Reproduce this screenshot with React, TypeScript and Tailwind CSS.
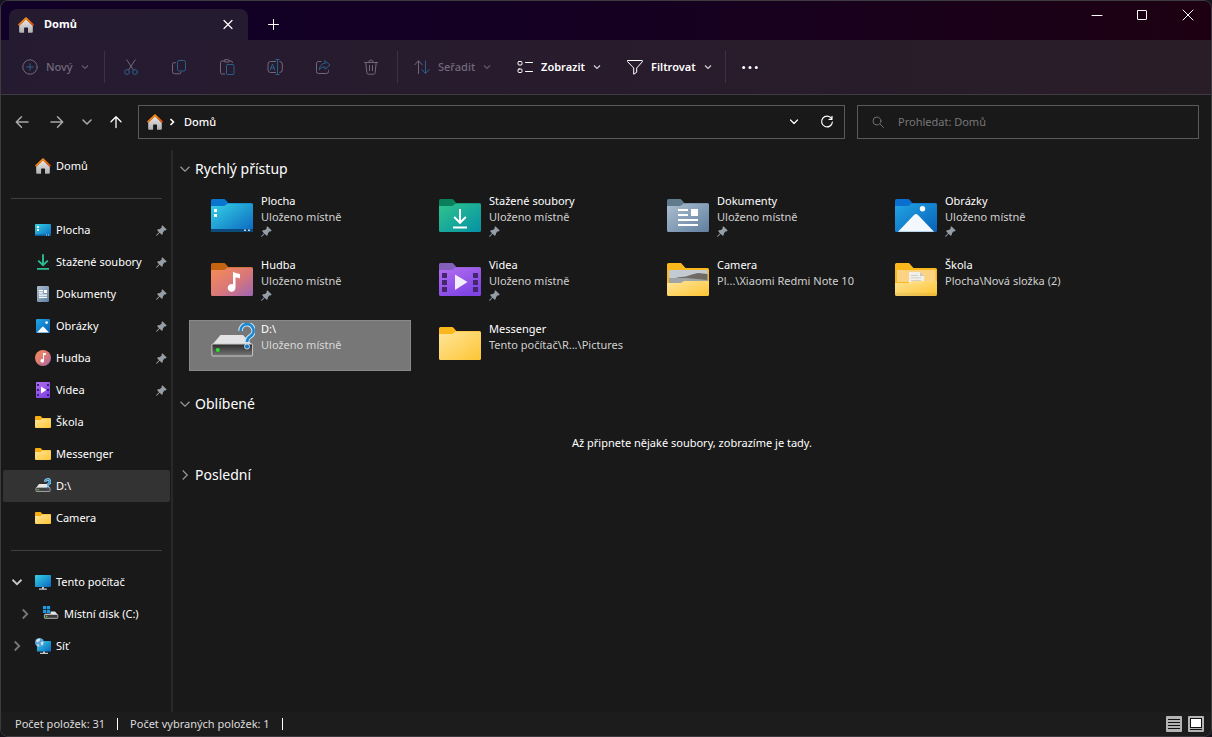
import React from "react";

type IconProps = { className?: string };

function Defs() {
  return (
    <svg className="absolute h-0 w-0" aria-hidden="true">
      <defs>
        <linearGradient id="roof" x1="0" y1="0" x2="1" y2="1">
          <stop offset="0" stopColor="#f9a21b" />
          <stop offset="1" stopColor="#d9480f" />
        </linearGradient>
        <linearGradient id="wall" x1="0" y1="0" x2="0" y2="1">
          <stop offset="0" stopColor="#e8e8e8" />
          <stop offset="1" stopColor="#b0b0b0" />
        </linearGradient>
        <linearGradient id="cyan" x1="0" y1="0" x2="1" y2="1">
          <stop offset="0" stopColor="#35d3e6" />
          <stop offset="1" stopColor="#0b66c0" />
        </linearGradient>
        <linearGradient id="green" x1="0" y1="0" x2="1" y2="1">
          <stop offset="0" stopColor="#2fc48d" />
          <stop offset="1" stopColor="#0591a5" />
        </linearGradient>
        <linearGradient id="slate" x1="0" y1="0" x2="1" y2="1">
          <stop offset="0" stopColor="#aebfd0" />
          <stop offset="1" stopColor="#5f7f9f" />
        </linearGradient>
        <linearGradient id="blue" x1="0" y1="0" x2="1" y2="1">
          <stop offset="0" stopColor="#22a5e4" />
          <stop offset="1" stopColor="#0760b8" />
        </linearGradient>
        <linearGradient id="music" x1="0" y1="0" x2="1" y2="1">
          <stop offset="0" stopColor="#f58d55" />
          <stop offset="0.55" stopColor="#d9777a" />
          <stop offset="1" stopColor="#9c66b4" />
        </linearGradient>
        <linearGradient id="purple" x1="0" y1="0" x2="0.6" y2="1">
          <stop offset="0" stopColor="#b36ff0" />
          <stop offset="1" stopColor="#8044e4" />
        </linearGradient>
        <linearGradient id="yellow" x1="0" y1="0" x2="1" y2="1">
          <stop offset="0" stopColor="#ffe59b" />
          <stop offset="1" stopColor="#fdc533" />
        </linearGradient>
        <linearGradient id="drive" x1="0" y1="0" x2="0" y2="1">
          <stop offset="0" stopColor="#2c2c2c" />
          <stop offset="1" stopColor="#777777" />
        </linearGradient>
      </defs>
    </svg>
  );
}

/* ---------- small coloured icons ---------- */

const Home = () => (
  <svg className="h-4 w-4 shrink-0" viewBox="0 0 16 16" aria-hidden="true">
    <path d="M1.200 8.500 8 2.200l6.800 6.300v6.300a.9.9 0 0 1-.9.9H10v-4.700a.6.6 0 0 0-.6-.6H6.700a.6.6 0 0 0-.6.600v4.700H2.100a.9.9 0 0 1-.9-.9z" fill="url(#wall)" />
    <path d="M1.100 7.700 8 1.300l6.900 6.400" fill="none" stroke="url(#roof)" strokeWidth="1.900" strokeLinecap="round" strokeLinejoin="round" />
  </svg>
);

const DesktopSmall = () => (
  <svg className="h-4 w-4 shrink-0" viewBox="0 0 16 16" aria-hidden="true">
    <rect y="2" width="16" height="12" rx="1" fill="url(#cyan)" />
    <path d="M2 4h2v2H2zM2 7h2v2H2z" fill="#fff" />
    <path d="M0 12.6h16v.6a.8.8 0 0 1-.8.8H.8a.8.8 0 0 1-.8-.8z" fill="#0b5c9c" />
    <path d="M11 12.5h1v1h-1zM13 12.5h1v1h-1z" fill="#cde" />
  </svg>
);

const DownloadSmall = () => (
  <svg className="h-4 w-4 shrink-0" viewBox="0 0 16 16" aria-hidden="true">
    <path d="M8 .3v10.5M3.200 6.600 8 11.200l4.800-4.600M2 14.900h12" fill="none" stroke="#2bbd93" strokeWidth="1.900" />
  </svg>
);

const DocSmall = () => (
  <svg className="h-4 w-4 shrink-0" viewBox="0 0 16 16" aria-hidden="true">
    <rect x="2" width="12" height="16" rx="1.200" fill="url(#slate)" />
    <path d="M4 4h4v1.200H4zM9 4h3v3H9zM4 6.200h4v1.200H4zM4 8.500h8v1.200H4zM4 10.800h8V12H4z" fill="#fff" />
  </svg>
);

const PictureSmall = () => (
  <svg className="h-4 w-4 shrink-0" viewBox="0 0 16 16" aria-hidden="true">
    <rect x="1" y="1" width="14" height="14" rx="1" fill="url(#blue)" />
    <path d="m2 14.600 5.200-5.700a1 1 0 0 1 1.500 0l5.300 5.700z" fill="#fff" />
    <circle cx="11.600" cy="4.600" r="1.300" fill="#fff" />
  </svg>
);

const MusicSmall = () => (
  <svg className="h-4 w-4 shrink-0" viewBox="0 0 16 16" aria-hidden="true">
    <circle cx="8" cy="8" r="8" fill="url(#music)" />
    <path d="M8 3h2.900v2H9v5.800a1.800 1.800 0 1 1-1-1.600z" fill="#fff" />
  </svg>
);

const VideoSmall = () => (
  <svg className="h-4 w-4 shrink-0" viewBox="0 0 16 16" aria-hidden="true">
    <rect x="1" width="14" height="16" rx="1" fill="url(#purple)" />
    <path d="M2 2h2v2H2zM2 7h2v2H2zM2 12h2v2H2zM12 2h2v2h-2zM12 7h2v2h-2zM12 12h2v2h-2z" fill="#3a1f78" />
    <path d="m6 4.500 5.400 3.500L6 11.500z" fill="#fff" />
  </svg>
);

const FolderSmall = () => (
  <svg className="h-4 w-4 shrink-0" viewBox="0 0 16 16" aria-hidden="true">
    <path d="M0 3a1 1 0 0 1 1-1h4.600L7.400 4H15a1 1 0 0 1 1 1v3H0z" fill="#f7ae10" />
    <path d="M0 6h5.500L7.300 4.600H16V13a1 1 0 0 1-1 1H1a1 1 0 0 1-1-1z" fill="url(#yellow)" />
  </svg>
);

const DriveSmall = () => (
  <svg className="h-4 w-4 shrink-0" viewBox="0 0 16 16" aria-hidden="true">
    <path d="M4 6h8l3 4H1z" fill="#e6e6e6" />
    <rect x="1" y="9.500" width="14" height="4" rx=".6" fill="#444" stroke="#b5b5b5" strokeWidth=".8" />
    <path d="M2.600 11h1.300v1.300H2.600z" fill="#3fe03f" />
    <path d="M10.400 3.700a2.300 2.300 0 1 1 3.300 2.100c-.8.400-1 .8-1 1.700" fill="none" stroke="#bfe0f7" strokeWidth="2.600" />
    <path d="M10.400 3.700a2.300 2.300 0 1 1 3.300 2.100c-.8.400-1 .8-1 1.700" fill="none" stroke="#2190d6" strokeWidth="1.300" />
    <circle cx="12.700" cy="9.600" r="1" fill="#2190d6" />
  </svg>
);

const Monitor = () => (
  <svg className="h-4 w-4 shrink-0" viewBox="0 0 16 16" aria-hidden="true">
    <rect y="1" width="16" height="12" rx=".8" fill="url(#cyan)" />
    <path d="M7 13h2v1.600h3v1.200H4v-1.200h3z" fill="#c4c9ce" />
  </svg>
);

const SystemDrive = () => (
  <svg className="h-4 w-4 shrink-0" viewBox="0 0 16 16" aria-hidden="true">
    <path d="M0 0h3.200v3.200H0zM3.900 0h3.200v3.200H3.900zM0 3.900h3.200v3.200H0zM3.900 3.900h3.200v3.200H3.900z" fill="#1c9be8" />
    <path d="M7.600 5.500H12l3 3.500H1.500l.6-1.300h5.500z" fill="#e6e6e6" />
    <rect x="1.400" y="8.500" width="13.400" height="3.800" rx=".6" fill="#3c3c3c" stroke="#c2c2c2" strokeWidth=".9" />
    <path d="M3 9.800h1.300v1.300H3z" fill="#3fe03f" />
  </svg>
);

const Network = () => (
  <svg className="h-4 w-4 shrink-0" viewBox="0 0 16 16" aria-hidden="true">
    <rect x="2" y="3" width="14" height="10.500" rx=".6" fill="url(#cyan)" />
    <path d="M8 13.500h2v1.200h3v1.200H5v-1.200h3z" fill="#c4c9ce" />
    <circle cx="4.500" cy="4.500" r="4.500" fill="#5aa5d8" />
    <path d="M1 2.500C2.300.9 4 .6 5.300 1L4.600 3 2.300 4.400zM5.500 4.500l2.700-1c.4 1.600 0 3-1.200 4.200zM2 6.200l2 .6.300 1.800A4 4 0 0 1 2 7.600z" fill="#d3e6f3" />
  </svg>
);

const Pin = () => (
  <svg className="h-[11px] w-[11px] shrink-0" viewBox="0 0 11 11" aria-hidden="true">
    <path d="M6.400.3 10.700 4.600 9.600 5.500 8.700 5.300 7 7.200 6.700 9.300 5.600 9.800 3.600 7.800.9 10.700.2 10.700.3 9.900 3 7.200 1.200 5.300 1.800 4.200 4 4 5.800 2.300 5.500 1.300z" fill="#959ea7" />
  </svg>
);

/* ---------- large folder icons ---------- */

function Folder({ tab, body, children }: { tab: string; body: string; children?: React.ReactNode }) {
  return (
    <svg className="h-[34px] w-[42px]" viewBox="0 0 42 34" aria-hidden="true">
      <path d="M0 1.500A1.500 1.500 0 0 1 1.500 0H12.500c1 0 1.600.3 2.200 1l2.600 3H40.500A1.500 1.500 0 0 1 42 5.500V18H0z" fill={tab} />
      <path d="M0 7h12.500c1 0 1.700-.3 2.400-1l1-.9c.5-.5 1-.7 1.800-.7H40.500A1.500 1.500 0 0 1 42 5.900v25.600a1.500 1.500 0 0 1-1.500 1.500h-39A1.500 1.500 0 0 1 0 31.500z" fill={body} />
      {children}
    </svg>
  );
}

const DesktopFolder = () => (
  <Folder tab="#0a74cf" body="url(#cyan)">
    <path d="M3 10h3v3H3zM3 15h3v3H3z" fill="#fff" />
    <path d="M0 30h42v1.500a1.500 1.500 0 0 1-1.500 1.500h-39A1.500 1.500 0 0 1 0 31.500z" fill="#0c4c7c" />
    <path d="M33 30.500h2v1.500h-2zM37 30.500h2v1.500h-2z" fill="#bcd6e8" />
  </Folder>
);
const DownloadFolder = () => (
  <Folder tab="#0a7f5c" body="url(#green)">
    <path d="M21 10v13.500M15.200 18l5.800 5.800 5.800-5.800M14 28.500h14" fill="none" stroke="#fff" strokeWidth="2" />
  </Folder>
);
const DocFolder = () => (
  <Folder tab="#607c8c" body="url(#slate)">
    <path d="M11 10h10v2H11zM24 10h7v7h-7zM11 15h10v2H11zM11 20h20v2H11zM11 25h20v2H11z" fill="#fff" />
  </Folder>
);
const PictureFolder = () => (
  <Folder tab="#0a6fce" body="url(#blue)">
    <path d="m3 32.800 16-16.900a3 3 0 0 1 4 0l16 16.900z" fill="#f2f8fd" />
    <circle cx="27.500" cy="9.800" r="2.700" fill="#fff" />
  </Folder>
);
const MusicFolder = () => (
  <Folder tab="#c46410" body="url(#music)">
    <path d="M22 8.500c1.500 1.600 4 1.800 7 2.500v4.500c-1.800-.8-3.300-1-4.500-1v10.300a3.900 3.900 0 1 1-2.500-3.600z" fill="#fff" />
  </Folder>
);
const VideoFolder = () => (
  <Folder tab="#8460bd" body="url(#purple)">
    <path d="M3 10h5v5H3zM3 17h5v5H3zM3 24h5v5H3zM34 10h5v5h-5zM34 17h5v5h-5zM34 24h5v5h-5z" fill="#44266f" />
    <path d="M16 11.500 28.500 19 16 27z" fill="#f3eefb" />
  </Folder>
);
const PlainFolder = () => <Folder tab="#fbb81c" body="url(#yellow)" />;

const CameraFolder = () => (
  <svg className="h-[34px] w-[42px]" viewBox="0 0 42 34" aria-hidden="true">
    <path d="M0 1.500A1.500 1.500 0 0 1 1.500 0H14l4.500 5H40.500A1.500 1.500 0 0 1 42 6.500V30H0z" fill="#fbb81c" />
    <path d="M2 7h38.500v12H2z" fill="#c3cad2" />
    <path d="M10 14.500l9-1 6-2 6-1.500 9.500 1v9H2z" fill="#6f6a63" />
    <path d="M2 15h18l20.500 2v3H2z" fill="#9ea3a6" />
    <path d="M0 20h13c2 0 3-2 5-2h24v13.500a1.500 1.500 0 0 1-1.500 1.500h-39A1.500 1.500 0 0 1 0 31.500z" fill="url(#yellow)" />
  </svg>
);

const SchoolFolder = () => (
  <svg className="h-[34px] w-[42px]" viewBox="0 0 42 34" aria-hidden="true">
    <path d="M0 1.500A1.500 1.500 0 0 1 1.500 0H14l4.500 5H40.500A1.500 1.500 0 0 1 42 6.500V30H0z" fill="#fbb81c" />
    <path d="M2 7h38.500v12H2z" fill="#fbd382" />
    <path d="M14 9h11l4 4v8H14z" fill="#f1efea" />
    <path d="M25 9v4h4zM16 12h7v.7h-7zM16 14.500h10v.7H16zM16 17h10v.7H16z" fill="#c9c6c0" />
    <path d="M0 20h13c2 0 3-2 5-2h24v13.500a1.500 1.500 0 0 1-1.500 1.500h-39A1.500 1.500 0 0 1 0 31.500z" fill="url(#yellow)" fillOpacity=".93" />
  </svg>
);

const UnknownDrive = () => (
  <svg className="h-[34px] w-[44px]" viewBox="0 0 44 34" aria-hidden="true">
    <path d="M9.500 12h22.500l9.500 10H1z" fill="#e3e3e6" />
    <rect x=".9" y="21" width="40.700" height="12" rx="1" fill="url(#drive)" stroke="#c9c9c9" strokeWidth="1" />
    <circle cx="6.800" cy="27" r="2" fill="#2be32b" />
    <path d="M29.600 8a6.500 6.500 0 1 1 9.700 5.300c-2.300 1.400-3.300 2.500-3.300 5.700" fill="none" stroke="#c4e4f8" strokeWidth="4.600" />
    <path d="M29.600 8a6.500 6.500 0 1 1 9.700 5.300c-2.300 1.400-3.300 2.500-3.300 5.700" fill="none" stroke="#1c86cf" strokeWidth="2.600" />
    <circle cx="36" cy="23.500" r="2.500" fill="#1c78bd" stroke="#b9dcf2" strokeWidth="1" />
  </svg>
);

/* ---------- line icons ---------- */

function Line({ className = "h-4 w-4", children }: IconProps & { children: React.ReactNode }) {
  return (
    <svg className={className} viewBox="0 0 16 16" fill="none" stroke="currentColor" strokeWidth="1" strokeLinecap="round" strokeLinejoin="round" aria-hidden="true">
      {children}
    </svg>
  );
}

const Chevron = ({ className = "h-2 w-2" }: IconProps) => (
  <svg className={className} viewBox="0 0 8 8" fill="none" stroke="currentColor" strokeWidth="1.200" aria-hidden="true">
    <path d="m1 2.500 3 3 3-3" />
  </svg>
);

const BLUE = "#2c6088";

const NewIcon = () => (
  <Line><circle cx="8" cy="8" r="7.200" /><path d="M8 4.800v6.400M4.800 8h6.400" stroke={BLUE} /></Line>
);
const CutIcon = () => (
  <Line>
    <path d="M3.800.8 10.400 11M12.200.8 5.600 11" />
    <g stroke={BLUE}><circle cx="4" cy="13" r="2.400" /><circle cx="12" cy="13" r="2.400" /></g>
  </Line>
);
const CopyIcon = () => (
  <Line>
    <path d="M4.500 3.700H3.200A1.700 1.700 0 0 0 1.500 5.400v7.200a2.200 2.200 0 0 0 2.200 2.200h4.600a1.700 1.700 0 0 0 1.700-1.500" />
    <rect x="6.500" y="1.500" width="8" height="10.500" rx="1.800" stroke={BLUE} />
  </Line>
);
const PasteIcon = () => (
  <Line>
    <path d="M5.500 2H3a1.500 1.500 0 0 0-1.500 1.500v10A1.500 1.500 0 0 0 3 15h2.800M10 2h2a1.500 1.500 0 0 1 1.500 1.500" />
    <rect x="5.200" y=".7" width="5" height="2.300" rx="1" />
    <rect x="7.500" y="5.500" width="7.500" height="10" rx="1" stroke={BLUE} />
  </Line>
);
const RenameIcon = () => (
  <Line>
    <path d="M8.500 2.500h-5A2.500 2.500 0 0 0 1 5v6a2.500 2.500 0 0 0 2.500 2.500h5M12.800 2.500A2.500 2.500 0 0 1 15.300 5v6a2.500 2.500 0 0 1-2.500 2.500" />
    <path d="M8.800.5h3.400M8.800 15.500h3.400M10.500.5v15M3.200 11 5.500 5l2.300 6M4 9h3" stroke={BLUE} />
  </Line>
);
const ShareIcon = () => (
  <Line>
    <path d="M6 2.500H3.500A2 2 0 0 0 1.500 4.500v8a2 2 0 0 0 2 2h8a2 2 0 0 0 2-2v-1" />
    <path d="M10 1.800 15 6l-5 4.300V8c-3 0-4.600 1-5.700 2.800C4.600 7 6.500 4.500 10 4.200z" stroke={BLUE} />
  </Line>
);
const TrashIcon = () => (
  <Line>
    <path d="M1.500 3.500h13M5.700 3.300a2.300 2.300 0 0 1 4.600 0M2.800 3.500l1 10a1.700 1.700 0 0 0 1.700 1.700h5a1.700 1.700 0 0 0 1.700-1.700l1-10M6.500 6.500v5.200M9.500 6.500v5.200" />
  </Line>
);
const SortIcon = () => (
  <Line>
    <path d="M4.500 14.500V2M.7 5.800l3.800-4 3.800 4" />
    <path d="M11.500 2v12.300M7.800 10.500l3.700 4 3.700-4" stroke={BLUE} />
  </Line>
);
const ViewIcon = () => (
  <Line>
    <rect x="1" y="2.500" width="4" height="3.500" rx="1" /><rect x="1" y="10" width="4" height="3.500" rx="1" />
    <path d="M8.500 3.500h7M8.500 12.500h7" />
  </Line>
);
const FilterIcon = () => (
  <Line><path d="M.7 1.500h14.600v1.300L9.700 9v4.300l-3 1.900V9L.7 2.800z" /></Line>
);

/* ---------- data ---------- */

type TreeItem = { name: string; icon: React.ComponentType; pinned?: boolean; selected?: boolean; expander?: "open" | "closed"; nested?: boolean };

const pinnedItems: TreeItem[] = [
  { name: "Plocha", icon: DesktopSmall, pinned: true },
  { name: "Stažené soubory", icon: DownloadSmall, pinned: true },
  { name: "Dokumenty", icon: DocSmall, pinned: true },
  { name: "Obrázky", icon: PictureSmall, pinned: true },
  { name: "Hudba", icon: MusicSmall, pinned: true },
  { name: "Videa", icon: VideoSmall, pinned: true },
  { name: "Škola", icon: FolderSmall },
  { name: "Messenger", icon: FolderSmall },
  { name: "D:\\", icon: DriveSmall, selected: true },
  { name: "Camera", icon: FolderSmall },
];

const computerItems: TreeItem[] = [
  { name: "Tento počítač", icon: Monitor, expander: "open" },
  { name: "Místní disk (C:)", icon: SystemDrive, expander: "closed", nested: true },
  { name: "Síť", icon: Network, expander: "closed" },
];

const tiles = [
  { name: "Plocha", place: "Uloženo místně", icon: DesktopFolder, pinned: true },
  { name: "Stažené soubory", place: "Uloženo místně", icon: DownloadFolder, pinned: true },
  { name: "Dokumenty", place: "Uloženo místně", icon: DocFolder, pinned: true },
  { name: "Obrázky", place: "Uloženo místně", icon: PictureFolder, pinned: true },
  { name: "Hudba", place: "Uloženo místně", icon: MusicFolder, pinned: true },
  { name: "Videa", place: "Uloženo místně", icon: VideoFolder, pinned: true },
  { name: "Camera", place: "Pl...\\Xiaomi Redmi Note 10", icon: CameraFolder },
  { name: "Škola", place: "Plocha\\Nová složka (2)", icon: SchoolFolder },
  { name: "D:\\", place: "Uloženo místně", icon: UnknownDrive, selected: true },
  { name: "Messenger", place: "Tento počítač\\R...\\Pictures", icon: PlainFolder },
];

const fileActions = [
  { label: "Vyjmout", icon: CutIcon },
  { label: "Kopírovat", icon: CopyIcon },
  { label: "Vložit", icon: PasteIcon },
  { label: "Přejmenovat", icon: RenameIcon },
  { label: "Sdílet", icon: ShareIcon },
  { label: "Odstranit", icon: TrashIcon },
];

/* ---------- parts ---------- */

function TitleBar() {
  return (
    <header className="flex h-[39px] items-start justify-between bg-linear-to-r from-[#110027] via-[#150022] to-[#1d0012]">
      <div className="flex h-full items-end pl-2">
        <div className="flex h-[31px] w-[239px] items-center rounded-t-lg bg-[#251b31] pr-3 pl-[9px]">
          <Home />
          <span className="ml-[10px] flex-1 text-[11px] font-bold">Domů</span>
          <button aria-label="Zavřít kartu" className="flex h-4 w-4 items-center justify-center">
            <Line className="h-4 w-4"><path d="m4 3.500 8 8M12 3.500l-8 8" strokeWidth="1.200" /></Line>
          </button>
        </div>
        <button aria-label="Nová karta" className="flex h-[31px] w-[51px] items-center justify-center">
          <Line><path d="M7.500 2.500v10M2.500 7.500h10" /></Line>
        </button>
      </div>
      <div className="flex">
        <button aria-label="Minimalizovat" className="flex h-7 w-11 items-center justify-center">
          <Line><path d="M3 8.500h10" /></Line>
        </button>
        <button aria-label="Maximalizovat" className="flex h-7 w-[46px] items-center justify-center">
          <Line><rect x="3.500" y="3.500" width="9" height="9" rx=".5" /></Line>
        </button>
        <button aria-label="Zavřít" className="flex h-7 w-[46px] items-center justify-center">
          <Line><path d="m3 3 10 10M13 3 3 13" /></Line>
        </button>
      </div>
    </header>
  );
}

const Separator = () => <div className="h-8 w-px bg-[#3c3244]" />;

function Command({ label, icon: Icon, disabled }: { label: string; icon: React.ComponentType; disabled?: boolean }) {
  return (
    <button disabled={disabled} className="flex items-center gap-2 text-[11px] font-semibold text-white disabled:font-medium disabled:text-[#71697a]">
      <Icon />
      {label}
      <Chevron className="h-2 w-2 opacity-80" />
    </button>
  );
}

function Toolbar() {
  return (
    <div className="flex h-[55px] items-center border-b border-[#3f3b42] bg-linear-to-r from-[#251b31] via-[#281b2c] to-[#291d27]">
      <div className="flex w-[103px] pl-[21px]"><Command label="Nový" icon={NewIcon} disabled /></div>
      <Separator />
      <div className="flex px-[2px]">
        {fileActions.map(({ label, icon: Icon }) => (
          <button key={label} aria-label={label} disabled className="flex h-8 w-12 items-center justify-center text-[#71697a]">
            <Icon />
          </button>
        ))}
      </div>
      <Separator />
      <div className="flex gap-[26px] pr-[13px] pl-4">
        <Command label="Seřadit" icon={SortIcon} disabled />
        <Command label="Zobrazit" icon={ViewIcon} />
        <Command label="Filtrovat" icon={FilterIcon} />
      </div>
      <Separator />
      <button aria-label="Další" className="flex h-8 w-12 items-center justify-center">
        <svg className="h-4 w-4" viewBox="0 0 16 16" fill="currentColor" aria-hidden="true">
          <circle cx="1.700" cy="8.500" r="1.500" /><circle cx="8" cy="8.500" r="1.500" /><circle cx="14.300" cy="8.500" r="1.500" />
        </svg>
      </button>
    </div>
  );
}

function AddressRow() {
  return (
    <div className="flex items-center pt-[10px] pr-3 pb-[11px]">
      <nav className="flex w-[137px] items-center pl-[13px]">
        <button aria-label="Zpět" className="mr-[19px] text-[#a8a8a8]">
          <Line><path d="M14 8H2.500M7.500 2.800 2.300 8l5.200 5.200" strokeWidth="1.500" /></Line>
        </button>
        <button aria-label="Vpřed" className="mr-[14px] text-[#a8a8a8]">
          <Line><path d="M2 8h11.500M8.500 2.800 13.700 8l-5.200 5.200" strokeWidth="1.500" /></Line>
        </button>
        <button aria-label="Poslední umístění" className="mr-[13px] text-[#a8a8a8]">
          <Line><path d="m4 6 4 4 4-4" strokeWidth="1.600" /></Line>
        </button>
        <button aria-label="Nahoru">
          <Line><path d="M8 13.500V2.800M3 7.700l5-5 5 5" strokeWidth="1.300" /></Line>
        </button>
      </nav>
      <div className="flex h-[34px] flex-1 items-center border border-[#5a5a5a] px-2">
        <Home />
        <Chevron className="mx-[5px] h-2 w-2 -rotate-90 [stroke-width:1.600]" />
        <button className="ml-[3px] text-[11px] font-medium">Domů</button>
        <button aria-label="Předchozí umístění" className="mr-4 ml-auto">
          <Line><path d="m4.500 6 3.500 3.500L11.500 6" strokeWidth="1.200" /></Line>
        </button>
        <button aria-label="Aktualizovat">
          <Line className="mx-[1px] h-4 w-4"><path d="M12.500 4.500A5.400 5.400 0 1 0 13.400 8M13 2.300v3h-3" strokeWidth="1.200" /></Line>
        </button>
      </div>
      <label className="ml-3 flex h-[34px] w-[342px] items-center gap-3 border border-[#5a5a5a] px-3 text-[#6e6e6e]">
        <Line className="h-4 w-4 shrink-0"><circle cx="7" cy="7" r="4" /><path d="m10 10 3.500 3.500" /></Line>
        <input type="search" aria-label="Prohledat: Domů" placeholder="Prohledat: Domů" className="min-w-0 flex-1 bg-transparent text-[11px] outline-none placeholder:text-[#777]" />
      </label>
    </div>
  );
}

function TreeRow({ name, icon: Icon, pinned, selected, expander, nested }: TreeItem) {
  return (
    <li className={`flex h-8 items-center ${selected ? "rounded-xs bg-[#333]" : ""} ${nested ? "pl-2" : ""}`}>
      {expander ? (
        <button aria-label={expander === "open" ? `Sbalit ${name}` : `Rozbalit ${name}`} className="flex w-[27px] justify-center">
          <Chevron className={expander === "open" ? "h-3 w-3 text-[#c8c8c8]" : "h-3 w-3 -rotate-90 text-[#777]"} />
        </button>
      ) : (
        <span className="w-[27px]" />
      )}
      <button className="flex h-full flex-1 items-center gap-[5px] pr-[3px] pl-[5px] text-left">
        <Icon />
        <span className="whitespace-nowrap">{name}</span>
        {pinned && <span className="ml-auto"><Pin /></span>}
      </button>
    </li>
  );
}

const TreeDivider = () => (
  <div className="flex h-8 items-center px-2"><hr className="w-full border-[#3f3f3f]" /></div>
);

function Sidebar() {
  return (
    <aside className="w-[172px] shrink-0 border-r-2 border-[#292929] pr-px pl-[2px] text-[11px]">
      <ul><TreeRow name="Domů" icon={Home} /></ul>
      <TreeDivider />
      <ul>{pinnedItems.map((item) => <TreeRow key={item.name} {...item} />)}</ul>
      <TreeDivider />
      <ul>{computerItems.map((item) => <TreeRow key={item.name} {...item} />)}</ul>
    </aside>
  );
}

function SectionTitle({ title, open }: { title: string; open?: boolean }) {
  return (
    <h2>
      <button aria-expanded={open ?? false} className="flex h-6 items-center gap-1 text-sm">
        <Chevron className={open ? "h-3 w-3 text-[#999] [stroke-width:0.800]" : "h-3 w-3 -rotate-90 text-[#999] [stroke-width:0.800]"} />
        {title}
      </button>
    </h2>
  );
}

function Content() {
  return (
    <main className="flex-1 px-[6px] pt-[7px] text-[11px]">
      <SectionTitle title="Rychlý přístup" open />
      <ul className="grid grid-cols-[repeat(auto-fill,222px)] gap-x-[6px] gap-y-[13px] pt-[11px] pl-[10px]">
        {tiles.map(({ name, place, icon: Icon, pinned, selected }) => (
          <li key={name}>
            <button className={`flex h-[51px] w-full items-start border pl-[21px] text-left ${selected ? "border-[#8a8a8a] bg-[#777]" : "border-transparent"}`}>
              <span className={`w-[50px] shrink-0 ${selected ? "pt-[2px]" : "pt-[6px]"}`}><Icon /></span>
              <span className="min-w-0">
                <span className="block leading-4">{name}</span>
                <span className={`block leading-4 whitespace-nowrap ${selected ? "text-[#d8d8d8]" : "text-[#d0d0d0]"}`}>{place}</span>
                {pinned && <span className="block pt-px"><Pin /></span>}
              </span>
            </button>
          </li>
        ))}
      </ul>
      <div className="pt-[21px]"><SectionTitle title="Oblíbené" open /></div>
      <p className="pt-[19px] pb-3 text-center leading-4">Až připnete nějaké soubory, zobrazíme je tady.</p>
      <SectionTitle title="Poslední" />
    </main>
  );
}

function StatusBar() {
  return (
    <footer className="flex h-6 items-center bg-[#1c1c1c] pr-[7px] pl-[14px] text-[11px] text-[#dcdcdc]">
      <span>Počet položek: 31</span>
      <span className="mx-3 h-3 w-px bg-white" />
      <span>Počet vybraných položek: 1</span>
      <span className="mx-3 h-3 w-px bg-white" />
      <div className="ml-auto flex gap-[6px]">
        <button aria-label="Podrobnosti">
          <svg className="h-4 w-4" viewBox="0 0 16 16" aria-hidden="true">
            <rect width="16" height="16" rx="1" fill="#b4b4b4" />
            <path d="M2 3h12v1H2zM2 6h12v1H2zM2 9h12v1H2zM2 12h12v1H2z" fill="#111" />
          </svg>
        </button>
        <button aria-label="Velké ikony">
          <svg className="h-4 w-4" viewBox="0 0 16 16" aria-hidden="true">
            <rect width="16" height="16" rx="1" fill="#b4b4b4" />
            <rect x="2.500" y="2.500" width="11" height="9" fill="#fff" stroke="#111" />
            <path d="M2 13h12v1H2z" fill="#111" />
          </svg>
        </button>
      </div>
    </footer>
  );
}

export default function App() {
  return (
    <div className="min-h-screen bg-[#16141c] font-['Noto_Sans','Open_Sans',sans-serif] text-white">
      <Defs />
      <div className="flex min-h-screen flex-col overflow-hidden rounded-lg border border-[#3d3b40] bg-[#191919]">
        <TitleBar />
        <Toolbar />
        <AddressRow />
        <div className="flex flex-1">
          <Sidebar />
          <Content />
        </div>
        <StatusBar />
      </div>
    </div>
  );
}
